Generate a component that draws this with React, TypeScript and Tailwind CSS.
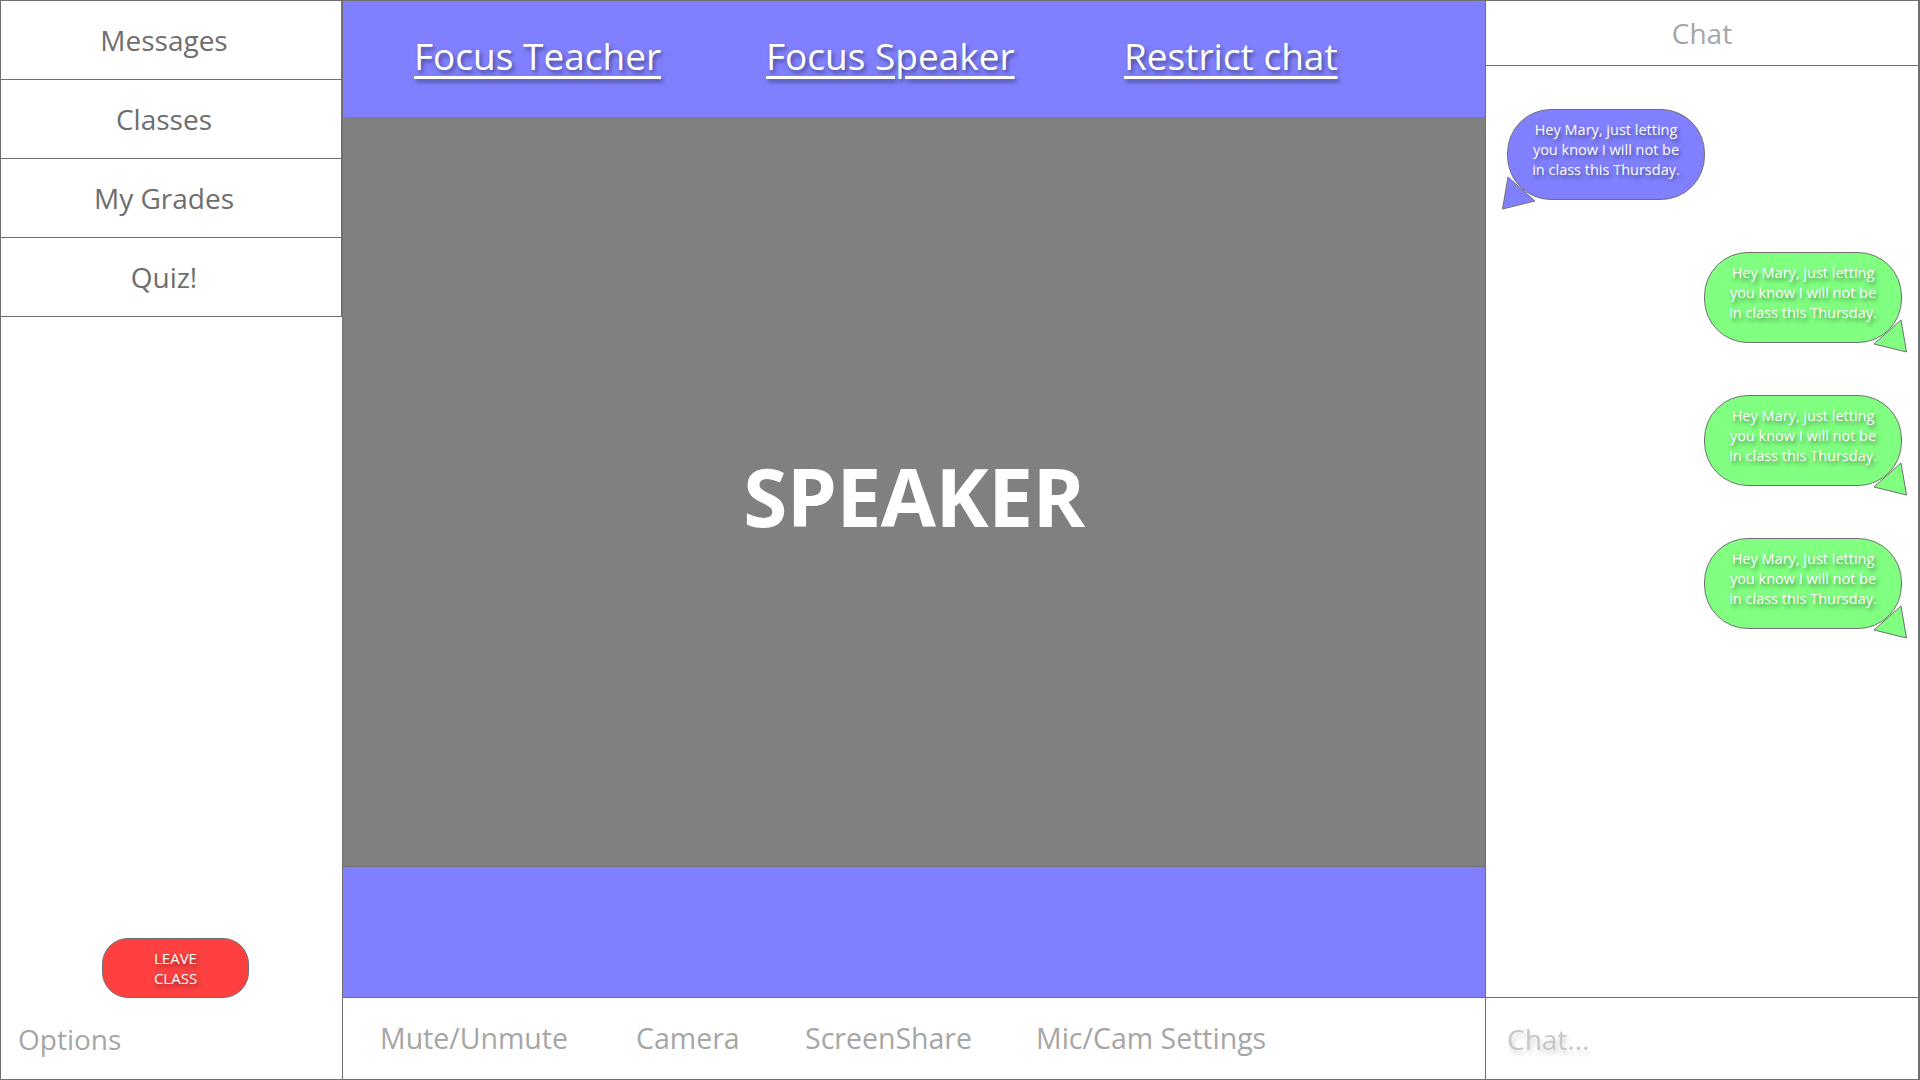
import React from "react";

const font = "font-['Open_Sans','Noto_Sans',sans-serif]";
const shadow = "[text-shadow:2px_3px_4px_rgba(0,0,0,0.45)]";

const navItems = ["Messages", "Classes", "My Grades", "Quiz!"];

const controls = [
  { label: "Mute/Unmute", w: "w-[256px]" },
  { label: "Camera", w: "w-[169px]" },
  { label: "ScreenShare", w: "w-[231px]" },
  { label: "Mic/Cam Settings", w: "" },
];

const messageText = (
  <>
    Hey Mary, just letting
    <br />
    you know I will not be
    <br />
    in class this Thursday.
  </>
);

function Bubble({ side }: { side: "left" | "right" }) {
  const isLeft = side === "left";
  return (
    <div
      className={`relative h-[91px] w-[198px] rounded-[44px] border border-[#707070] pt-[10px] text-center text-[14.5px] leading-[20px] text-white ${shadow} ${
        isLeft ? "bg-[#8080ff]" : "bg-[#80ff80]"
      }`}
    >
      {isLeft ? (
        <svg
          className="absolute -left-[7px] top-[58px]"
          width="40"
          height="44"
          viewBox="0 0 40 44"
        >
          <path
            d="M7 9 L1.5 41 L34 33 Z"
            fill="#8080ff"
            stroke="#707070"
            strokeWidth="1"
          />
        </svg>
      ) : (
        <svg
          className="absolute -right-[7px] top-[58px]"
          width="40"
          height="44"
          viewBox="0 0 40 44"
        >
          <path
            d="M33 9 L38.5 41 L6 33 Z"
            fill="#80ff80"
            stroke="#707070"
            strokeWidth="1"
          />
        </svg>
      )}
      <p className="relative">{messageText}</p>
    </div>
  );
}

export default function App() {
  return (
    <div
      className={`flex h-[1080px] w-[1920px] overflow-hidden border border-[#707070] bg-white ${font}`}
    >
      {/* left sidebar */}
      <aside className="flex w-[342px] shrink-0 flex-col border-r border-[#707070]">
        {navItems.map((item) => (
          <div
            key={item}
            className="-mt-px flex h-[80px] items-center justify-center border border-l-0 border-[#707070] pr-[14px] text-[28px] text-[#6e6e6e] first:mt-0 first:h-[79px] first:border-t-0"
          >
            {item}
          </div>
        ))}
        <div className="flex-1" />
        <div className="pl-[101px]">
          <button
            className={`h-[60px] w-[147px] rounded-[26px] border border-[#707070] bg-[#ff4040] text-[15px] leading-[20px] text-white ${shadow}`}
          >
            LEAVE
            <br />
            CLASS
          </button>
        </div>
        <div className="flex h-[81px] items-center pl-[17px] text-[28px] text-[#a6a6a6]">
          Options
        </div>
      </aside>

      {/* main stage */}
      <main className="flex min-w-0 flex-1 flex-col">
        <div className="flex h-[116px] shrink-0 items-center bg-[#8080ff] pb-[6px] pl-[71px] text-[37px] text-white">
          <div className="w-[352px]">
            <a href="#" className={`underline underline-offset-[6px] ${shadow}`}>
              Focus Teacher
            </a>
          </div>
          <div className="w-[358px]">
            <a href="#" className={`underline underline-offset-[6px] ${shadow}`}>
              Focus Speaker
            </a>
          </div>
          <div>
            <a href="#" className={`underline underline-offset-[6px] ${shadow}`}>
              Restrict chat
            </a>
          </div>
        </div>
        <div className="flex flex-1 items-center justify-center bg-[#808080] pt-[8px]">
          <h1 className="text-[80px] font-bold tracking-[-0.5px] text-white">
            SPEAKER
          </h1>
        </div>
        <div className="h-[132px] shrink-0 border-y border-[#707070] bg-[#8080ff]" />
        <div className="flex h-[81px] shrink-0 items-center pl-[37px] text-[28.5px] text-[#a6a6a6]">
          {controls.map((c) => (
            <div key={c.label} className={c.w}>
              {c.label}
            </div>
          ))}
        </div>
      </main>

      {/* chat panel */}
      <aside className="flex w-[434px] shrink-0 flex-col border-l border-r border-[#707070]">
        <div className="flex h-[65px] shrink-0 items-center justify-center border-b border-[#707070] text-[28px] text-[#a6a6a6]">
          Chat
        </div>
        <div className="flex flex-1 flex-col pt-[43px]">
          <div className="pl-[21px]">
            <Bubble side="left" />
          </div>
          <div className="mt-[52px] flex flex-col items-end gap-[52px] pr-[16px]">
            <Bubble side="right" />
            <Bubble side="right" />
            <Bubble side="right" />
          </div>
        </div>
        <div
          className={`flex h-[82px] shrink-0 items-center border-t border-[#707070] pl-[21px] text-[28px] text-[#c8c8c8] [text-shadow:2px_4px_5px_rgba(0,0,0,0.18)]`}
        >
          Chat...
        </div>
      </aside>
    </div>
  );
}
